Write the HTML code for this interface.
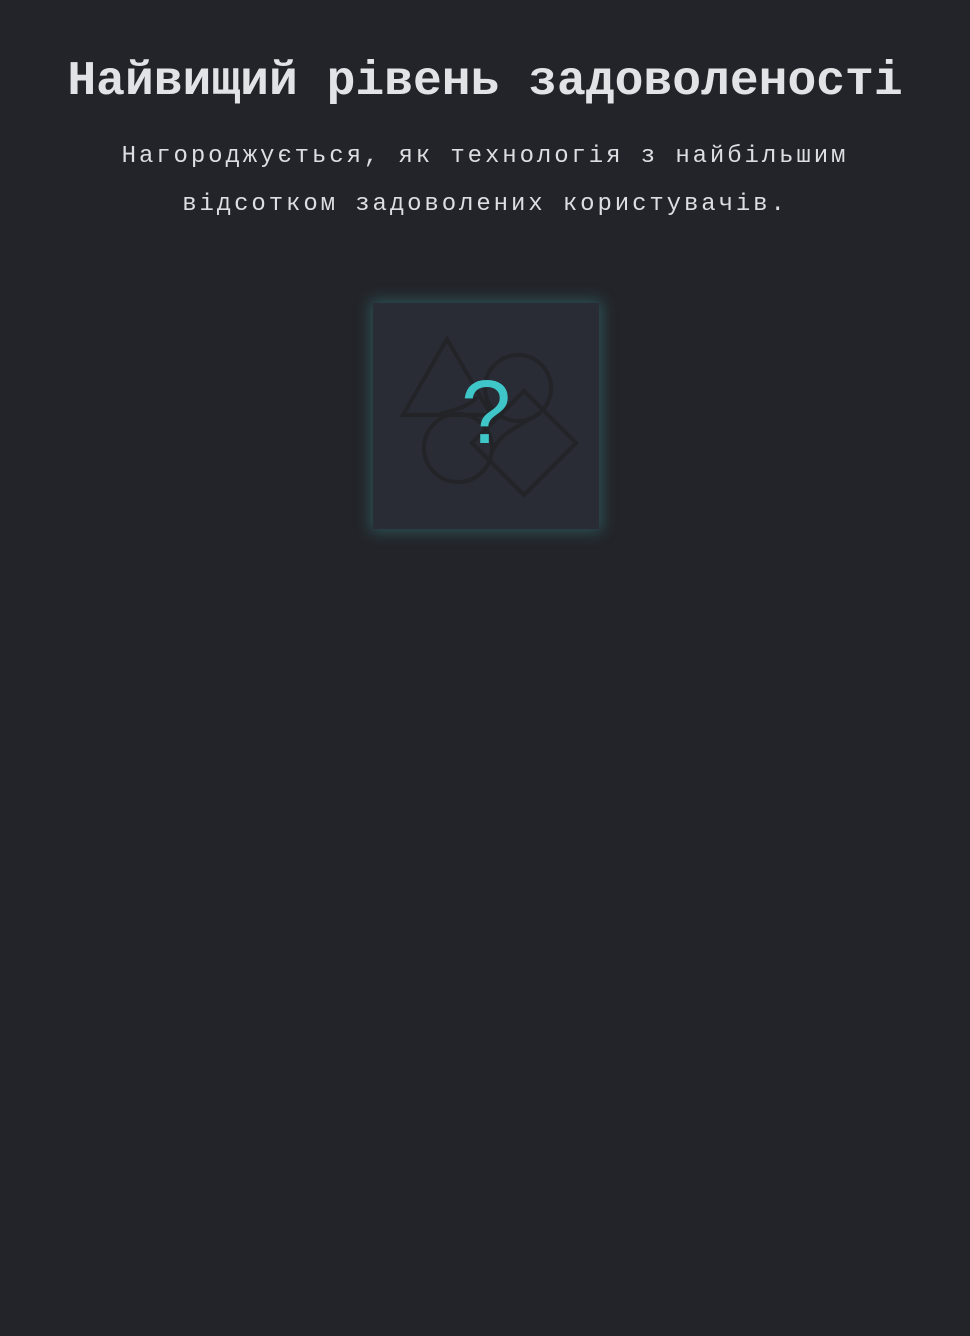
<!DOCTYPE html>
<html><head><meta charset="utf-8"><style>
html,body{margin:0;padding:0;background:#232429;width:970px;height:1336px;overflow:hidden}
h1{position:absolute;left:0;width:970px;top:52px;margin:0;text-align:center;font:bold 48px/60px "Liberation Mono",monospace;color:#e1e3e6;white-space:nowrap}
p{position:absolute;left:0;width:970px;top:133px;margin:0;text-align:center;font:24px/48px "Liberation Mono",monospace;letter-spacing:2.9px;color:#dcdee2}
.box{position:absolute;left:373px;top:303px;width:226px;height:226px;background:#292c34;box-shadow:0 0 14px 3px rgba(60,170,170,0.35)}
</style></head><body>
<h1>Найвищий рівень задоволеності</h1>
<p>Нагороджується, як технологія з найбільшим<br>відсотком задоволених користувачів.</p>
<div class="box"></div>
<svg style="position:absolute;left:0;top:0" width="970" height="600">
<g fill="none" stroke="#222428" stroke-width="4">
<polygon points="447,339 403,415 491,415"/>
<circle cx="458" cy="448" r="34"/>
<circle cx="518" cy="388" r="33"/>
<polygon points="524,391 576,443 524,495 472,443"/>
<path d="M477,397 C470,406 455,410 440,414 M540,413 C520,426 500,432 492,452"/>
</g>
<text x="486" y="443" text-anchor="middle" font-family="Liberation Sans, sans-serif" font-size="90" fill="#3fc6c9">?</text>
</svg>
</body></html>
